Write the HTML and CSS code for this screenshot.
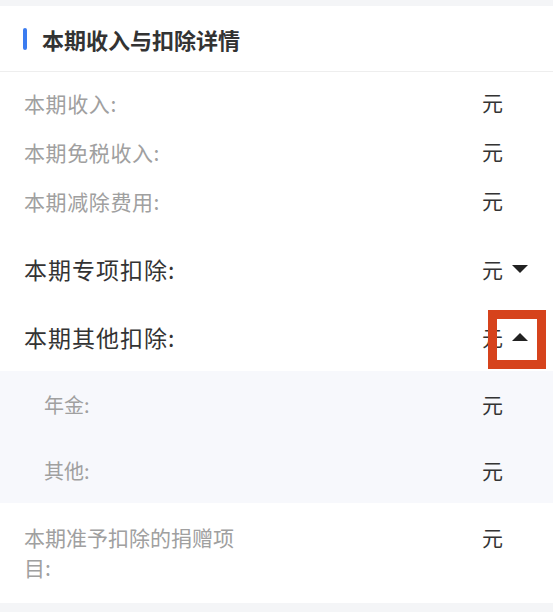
FILE: index.html
```html
<!DOCTYPE html>
<html lang="zh-CN">
<head>
<meta charset="utf-8">
<title>本期收入与扣除详情</title>
<link rel="stylesheet" href="styles.css">
</head>
<body>
<div class="card">
  <div class="header">
    <span class="bar"></span>
    <span class="title">本期收入与扣除详情</span>
  </div>
  <div class="group-gray">
    <div class="row row-gray"><span class="label">本期收入:</span><span class="unit">元</span><span class="slot"></span></div>
    <div class="row row-gray"><span class="label">本期免税收入:</span><span class="unit">元</span><span class="slot"></span></div>
    <div class="row row-gray"><span class="label">本期减除费用:</span><span class="unit">元</span><span class="slot"></span></div>
  </div>
  <div class="row row-dark"><span class="label">本期专项扣除:</span><span class="unit">元</span><span class="slot"><span class="tri tri-down"></span></span></div>
  <div class="row row-dark"><span class="label">本期其他扣除:</span><span class="unit">元</span><span class="slot"><span class="tri tri-up"></span></span><span class="highlight"></span></div>
  <div class="sub">
    <div class="row row-sub"><span class="label">年金:</span><span class="unit">元</span><span class="slot"></span></div>
    <div class="row row-sub"><span class="label">其他:</span><span class="unit">元</span><span class="slot"></span></div>
  </div>
  <div class="row row-donate"><span class="label">本期准予扣除的捐赠项目:</span><span class="unit">元</span><span class="slot"></span></div>
</div>
</body>
</html>
```
FILE: styles.css
```css
html, body {
  margin: 0;
  padding: 0;
}
body {
  background: #f4f5f7;
  font-family: "Noto Sans CJK SC", "Noto Sans", sans-serif;
  width: 553px;
  height: 612px;
  overflow: hidden;
}
.card {
  margin-top: 6px;
  background: #ffffff;
  height: 597px;
}
.header {
  height: 66px;
  box-sizing: border-box;
  border-bottom: 1px solid #eeeeee;
  display: flex;
  align-items: center;
  padding-left: 23px;
}
.bar {
  width: 4px;
  height: 22px;
  border-radius: 2px;
  background: #3b7cf0;
  margin-right: 15px;
}
.title {
  font-size: 22px;
  font-weight: bold;
  color: #333333;
}
.group-gray {
  padding-top: 6px;
  padding-bottom: 10px;
}
.row {
  display: flex;
  align-items: center;
  padding-left: 24px;
  padding-right: 25px;
  position: relative;
}
.label {
  flex: 1;
}
.unit {
  font-size: 21px;
  color: #333333;
  width: 21px;
  line-height: 1;
}
.slot {
  width: 25px;
  display: flex;
  justify-content: flex-end;
}
.row-gray {
  height: 49px;
}
.row-gray .label {
  font-size: 21px;
  letter-spacing: 0.6px;
  color: #a0a0a0;
}
.row-dark {
  height: 68px;
}
.row-dark .label {
  font-size: 23px;
  color: #333333;
  letter-spacing: 1px;
}
.tri {
  width: 0;
  height: 0;
  border-left: 8px solid transparent;
  border-right: 8px solid transparent;
}
.tri-down {
  border-top: 8px solid #222222;
}
.tri-up {
  border-bottom: 8px solid #222222;
}
.highlight {
  position: absolute;
  left: 488px;
  top: 7px;
  width: 58px;
  height: 59px;
  box-sizing: border-box;
  border: 9px solid #d6431c;
}
.sub {
  background: #f7f8fc;
}
.row-sub {
  height: 66px;
  padding-left: 44px;
}
.row-sub .label {
  font-size: 20px;
  color: #a0a0a0;
}
.row-donate {
  align-items: flex-start;
  padding-top: 19px;
}
.row-donate .label {
  flex: none;
  width: 228px;
  font-size: 21px;
  line-height: 30px;
  color: #a0a0a0;
  margin-right: auto;
}
.row-donate .unit {
  margin-top: 5px;
}
```
